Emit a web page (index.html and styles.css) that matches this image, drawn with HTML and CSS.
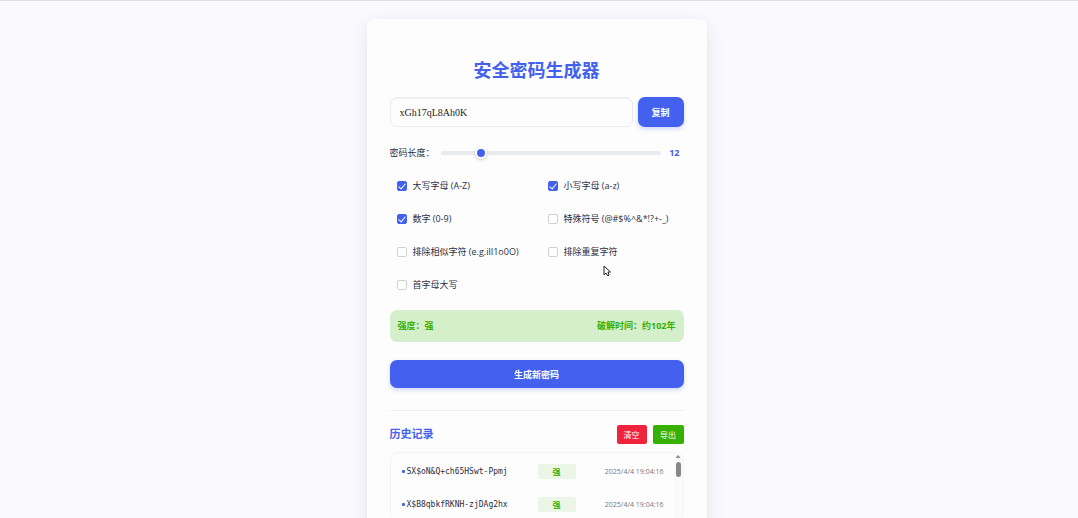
FILE: index.html
```html
<!DOCTYPE html>
<html lang="zh-CN">
<head>
    <meta charset="UTF-8">
    <meta name="viewport" content="width=device-width, initial-scale=1.0">
    <title>安全密码生成器</title>
    <link rel="stylesheet" href="styles.css">
</head>
<body>
    <main class="container">
        <h1>安全密码生成器</h1>

        <div class="password-box">
            <input type="text" class="password" id="password" value="xGh17qL8Ah0K" aria-label="密码" readonly>
            <button type="button" class="btn copy-btn">复制</button>
        </div>

        <div class="length-control">
            <label for="length">密码长度：</label>
            <input type="range" id="length" min="8" max="32" value="12">
            <span class="length-value">12</span>
        </div>

        <div class="options">
            <label class="option"><input type="checkbox" checked>大写字母 (A-Z)</label>
            <label class="option"><input type="checkbox" checked>小写字母 (a-z)</label>
            <label class="option"><input type="checkbox" checked>数字 (0-9)</label>
            <label class="option"><input type="checkbox">特殊符号 (@#$%^&amp;*!?+-_)</label>
            <label class="option"><input type="checkbox">排除相似字符 (e.g.ilI1o0O)</label>
            <label class="option"><input type="checkbox">排除重复字符</label>
            <label class="option"><input type="checkbox">首字母大写</label>
        </div>

        <div class="strength">
            <span>强度：强</span>
            <span>破解时间：约102年</span>
        </div>

        <button type="button" class="btn generate-btn">生成新密码</button>

        <section class="history">
            <div class="history-header">
                <h2>历史记录</h2>
                <div class="history-actions">
                    <button type="button" class="small-btn clear-btn">清空</button>
                    <button type="button" class="small-btn export-btn">导出</button>
                </div>
            </div>
            <div class="history-panel">
                <ul class="history-list">
                    <li>
                        <span class="history-password">SX$oN&amp;Q+ch65HSwt-Ppmj</span>
                        <span class="badge">强</span>
                        <time>2025/4/4 19:04:16</time>
                    </li>
                    <li>
                        <span class="history-password">X$B8qbkfRKNH-zjDAg2hx</span>
                        <span class="badge">强</span>
                        <time>2025/4/4 19:04:16</time>
                    </li>
                </ul>
                <div class="scrollbar">
                    <span class="scroll-arrow"></span>
                    <span class="scroll-thumb"></span>
                </div>
            </div>
        </section>
    </main>

    <svg class="cursor" viewBox="0 0 8 12" aria-hidden="true">
        <path d="M1 1v9l2-2 2 3 1-1-1-3h2.500z" fill="#fff" stroke="#222" stroke-width="1"/>
    </svg>
</body>
</html>
```

FILE: styles.css
```css
* {
    box-sizing: border-box;
    margin: 0;
    padding: 0;
}
body {
    padding: 18px 5px 0 0;
    border-top: 1px solid #dddde1;
    background-color: #f9f9fe;
    color: #2b2d42;
    font-family: "Open Sans", "Noto Sans CJK SC", sans-serif;
    font-size: 9px;
    line-height: 12px;
}
button, input {
    font-family: inherit;
}
.container {
    max-width: 340px;
    margin: 0 auto;
    padding: 36px 23px 24px;
    border-radius: 8px;
    background-color: #fdfdfd;
    box-shadow: 0 6px 18px rgba(43, 45, 90, 0.1);
}
h1 {
    margin-bottom: 12px;
    color: #4361ee;
    font-size: 18px;
    line-height: 30px;
    text-align: center;
}
.btn {
    border: none;
    border-radius: 7px;
    background-color: #4361ee;
    box-shadow: 0 2px 4px rgba(67, 97, 238, 0.25);
    color: white;
    font-size: 9px;
    font-weight: bold;
    cursor: pointer;
}
.password-box {
    display: flex;
    gap: 5px;
    height: 30px;
    margin-bottom: 18px;
}
.password {
    flex: 1;
    min-width: 0;
    padding: 0 9px;
    border: 1px solid #e9ebef;
    border-radius: 7px;
    background-color: #fdfdfd;
    box-shadow: inset 0 1px 1px rgba(43, 45, 66, 0.06);
    color: #222222;
    font-family: "Liberation Serif", serif;
    font-size: 10px;
}
.copy-btn {
    width: 46px;
}
.length-control {
    display: flex;
    align-items: center;
    height: 16px;
    margin-bottom: 12px;
}
.length-control label {
    width: 51px;
}
.length-control input {
    flex: 1;
    min-width: 0;
    height: 4px;
    border-radius: 2px;
    background-color: #e9ecef;
    appearance: none;
    -webkit-appearance: none;
}
.length-control input::-webkit-slider-thumb {
    width: 12px;
    height: 12px;
    border: 2px solid white;
    border-radius: 50%;
    background-color: #4361ee;
    box-shadow: 0 1px 3px rgba(0, 0, 0, 0.2);
    -webkit-appearance: none;
}
.length-value {
    width: 23px;
    padding-right: 4px;
    color: #4361ee;
    font-weight: bold;
    text-align: right;
}
.options {
    display: grid;
    grid-template-columns: 1fr 1fr;
    gap: 8px;
    margin-bottom: 13px;
}
.option {
    display: flex;
    align-items: center;
    gap: 6px;
    height: 25px;
    padding-left: 7px;
    white-space: nowrap;
}
.option input {
    flex: none;
    width: 10px;
    height: 10px;
    border: 1px solid #cfd0d4;
    border-radius: 2px;
    background-color: white;
    appearance: none;
    -webkit-appearance: none;
}
.option input:checked {
    display: grid;
    place-items: center;
    border-color: #4361ee;
    background-color: #4361ee;
}
.option input:checked::after {
    content: "";
    width: 3px;
    height: 6px;
    border: solid white;
    border-width: 0 1px 1px 0;
    transform: rotate(40deg);
}
.strength {
    display: flex;
    align-items: center;
    justify-content: space-between;
    height: 32px;
    margin-bottom: 18px;
    padding: 0 8px;
    border-radius: 7px;
    background-color: #d4efca;
    color: #38b000;
    font-weight: bold;
}
.generate-btn {
    display: block;
    width: 100%;
    height: 28px;
}
.history {
    margin-top: 22px;
    padding-top: 13px;
    border-top: 1px solid #f0f0f2;
}
.history-header {
    display: flex;
    align-items: center;
    justify-content: space-between;
    height: 20px;
    margin-bottom: 8px;
}
h2 {
    color: #4361ee;
    font-size: 11px;
    line-height: 20px;
}
.history-actions {
    display: flex;
    gap: 6px;
}
.small-btn {
    width: 30px;
    height: 19px;
    border: none;
    border-radius: 2px;
    color: white;
    font-size: 8px;
    cursor: pointer;
}
.clear-btn {
    background-color: #ef233c;
}
.export-btn {
    width: 31px;
    background-color: #38b000;
}
.history-panel {
    display: flex;
    border: 1px solid #f4f4f6;
    border-radius: 7px;
}
.history-list {
    flex: 1;
    list-style: none;
}
.history-list li {
    display: grid;
    grid-template-columns: 1fr 38px 88px;
    align-items: center;
    height: 33px;
    padding: 4px 10px 0 11px;
}
.history-password {
    display: flex;
    align-items: center;
    gap: 2px;
    font-family: "DejaVu Sans Mono", monospace;
    font-size: 8px;
}
.history-password::before {
    content: "";
    width: 3px;
    height: 3px;
    border-radius: 1px;
    background-color: #4361ee;
}
.badge {
    border-radius: 3px;
    background-color: #ebf6e6;
    color: #38b000;
    font-size: 8px;
    font-weight: bold;
    line-height: 15px;
    text-align: center;
}
time {
    color: #777780;
    font-size: 7px;
    text-align: right;
}
.scrollbar {
    width: 9px;
    padding-top: 2px;
    background-color: #fafafb;
}
.scroll-arrow {
    display: block;
    width: 5px;
    height: 3px;
    margin: 0 auto 4px;
    background-color: #888888;
    clip-path: polygon(50% 0, 100% 100%, 0 100%);
}
.scroll-thumb {
    display: block;
    width: 5px;
    height: 15px;
    margin: 0 auto;
    border-radius: 3px;
    background-color: #888888;
}
.cursor {
    position: absolute;
    top: 265px;
    left: 603px;
    width: 8px;
    height: 12px;
}
```
